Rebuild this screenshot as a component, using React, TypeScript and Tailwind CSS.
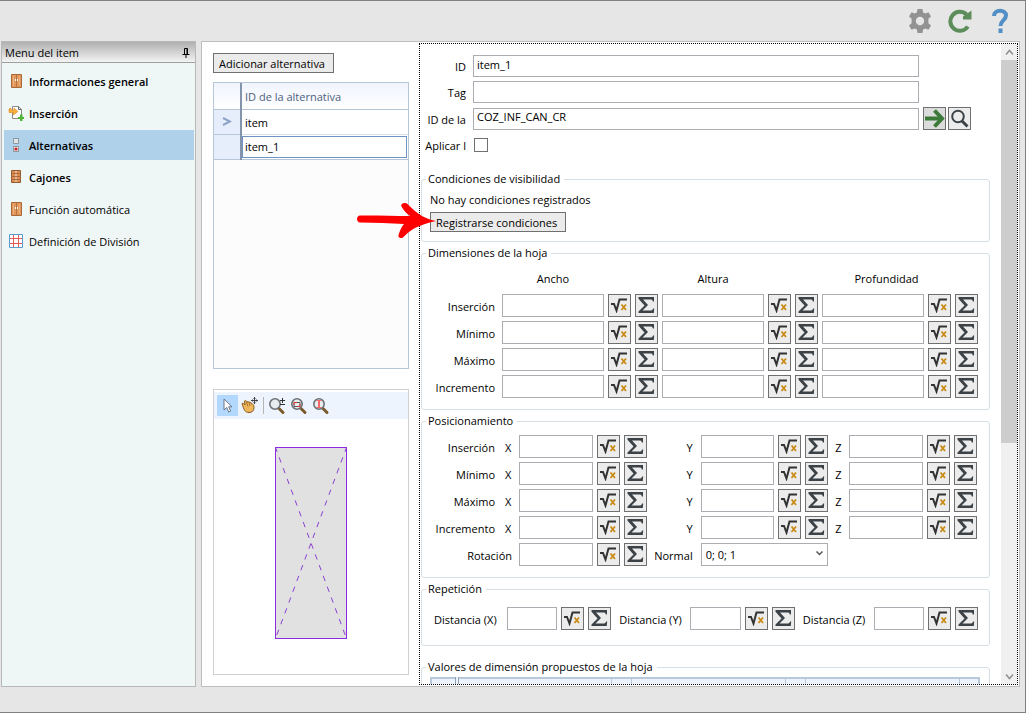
import { Fragment, useState, type ReactNode } from 'react';

const SIDEBAR = [
  { label: 'Informaciones general', icon: 'cabinet', bold: true },
  { label: 'Inserción', icon: 'insert', bold: true },
  { label: 'Alternativas', icon: 'options', bold: true },
  { label: 'Cajones', icon: 'drawers', bold: true },
  { label: 'Función automática', icon: 'cabinet', bold: false },
  { label: 'Definición de División', icon: 'grid', bold: false },
];

const LIMITS = ['Inserción', 'Mínimo', 'Máximo', 'Incremento'];
const SIZES = ['Ancho', 'Altura', 'Profundidad'];
const AXES = ['X', 'Y', 'Z'];

export default function App() {
  const [active, setActive] = useState('Alternativas');

  return (
    <div className="h-screen overflow-hidden bg-white pr-[6px] pb-[5px] font-['Open_Sans','Noto_Sans',sans-serif] text-[11px] leading-4 text-black">
      <div className="flex h-full flex-col border-t border-r border-b border-[#808080] bg-[#e6e6e6]">
        <TopBar />
        <div className="flex min-h-0 flex-1 gap-[5px] pr-[5px] pb-[25px] pl-px">
          <Sidebar active={active} onSelect={setActive} />
          <main className="relative flex min-w-0 flex-1 border border-[#bdbdbd] bg-white">
            <section className="flex w-[217px] shrink-0 flex-col items-start pt-[11px] pr-[10px] pb-[11px] pl-[11px]">
              <TextButton>Adicionar alternativa</TextButton>
              <AlternativesTable />
              <Preview />
            </section>
            <Form />
            <PointerArrow />
          </main>
        </div>
      </div>
    </div>
  );
}

function TopBar() {
  return (
    <header className="flex h-10 shrink-0 items-center justify-end gap-4 pr-[14px]">
      <button aria-label="Configuración">
        <svg width="24" height="24" viewBox="0 0 24 24">
          <path
            fill="#929292"
            fillRule="evenodd"
            d="M9.500 0h5l.6 3.400 2.200 1.200 3.200-1.300 2.500 4.300-2.600 2.200v4.400l2.600 2.200-2.500 4.300-3.200-1.300-2.200 1.200-.6 3.400h-5l-.6-3.400-2.200-1.200-3.200 1.300L1 16.400l2.600-2.200V9.800L1 7.600l2.500-4.300 3.200 1.300 2.200-1.200zM12 7.800a4.200 4.200 0 1 0 0 8.400 4.200 4.200 0 0 0 0-8.400z"
          />
        </svg>
      </button>
      <button aria-label="Actualizar">
        <svg width="25" height="24" viewBox="0 0 25 24" fill="none">
          <path d="M19.800 17.500A9.500 9.500 0 1 1 18.500 5.500" stroke="#5c8d5a" strokeWidth="4" />
          <path d="M23.500 1.500v9h-8.500v-3z" fill="#5c8d5a" />
        </svg>
      </button>
      <button aria-label="Ayuda">
        <svg width="22" height="26" viewBox="0 0 22 26" fill="none">
          <path d="M5 8C5 1 17 1 17 7.500c0 4.500-5.500 5-5.500 10.500" stroke="#528fc6" strokeWidth="4" />
          <path d="M9.500 20.500h4V25h-4z" fill="#528fc6" />
        </svg>
      </button>
    </header>
  );
}

function Sidebar({ active, onSelect }: { active: string; onSelect: (label: string) => void }) {
  return (
    <aside className="flex w-[195px] shrink-0 flex-col border border-[#b8b8b8] bg-[#eff6f6]">
      <div className="flex h-[21px] shrink-0 items-center justify-between border-b border-[#a0a0a0] bg-linear-to-b from-[#b0b0b0] to-[#f4f4f4] pt-0.5 pr-1 pl-[3px]">
        <span>Menu del item</span>
        <button aria-label="Fijar">
          <svg width="10" height="11" viewBox="0 0 10 11" fill="none" stroke="#000">
            <path d="M3.500 6V.5h3V6M1.500 6.500h7M5 6.500V10M6 1v5" />
          </svg>
        </button>
      </div>
      <nav className="flex flex-col gap-0.5 pt-[3px] pr-px pl-0.5">
        {SIDEBAR.map(({ label, icon, bold }) => (
          <button
            key={label}
            onClick={() => onSelect(label)}
            className={`flex h-[30px] items-center gap-[5px] pl-1 text-left ${bold ? 'font-semibold' : ''} ${
              active === label ? 'bg-[#afd1ea]' : ''
            }`}
          >
            <SidebarIcon name={icon} />
            <span className="pt-0.5">{label}</span>
          </button>
        ))}
      </nav>
    </aside>
  );
}

function SidebarIcon({ name }: { name: string }) {
  return (
    <svg width="16" height="16" viewBox="0 0 16 16" fill="none" className="shrink-0">
      {name === 'cabinet' && (
        <>
          <path d="M3.500 1.500h10v13h-10z" fill="#e2975c" stroke="#a8693a" />
          <path d="M8.500 2v12" stroke="#b87440" />
          <path d="M5.500 3.500v9M11.500 3.500v9" stroke="#eeb07c" />
          <path d="M7 6h1v2H7zM9 6h1v2H9z" fill="#fff" />
        </>
      )}
      {name === 'insert' && (
        <>
          <path d="M4.500 1.500h6l3 3v9h-9z" fill="#fff" stroke="#8a8a8a" />
          <path d="M10.500 1.500v3h3" stroke="#666" />
          <path d="M1 4v3.500h4.500V10L10 6.500 6 3v2H3V3z" fill="#f5b041" stroke="#e08a1c" strokeWidth=".6" />
          <path d="M12 9.500h2.500V12H16v2h-1.500v2H12v-2h-2v-2h2z" fill="#4fb53b" />
        </>
      )}
      {name === 'options' && (
        <>
          <rect x="5.500" y="1.500" width="5" height="5" fill="#dfe6ea" stroke="#8f9aa3" />
          <rect x="5.500" y="9.500" width="5" height="5" fill="#f3dede" stroke="#8f9aa3" />
          <circle cx="8" cy="12" r="1.600" fill="#c62828" />
        </>
      )}
      {name === 'drawers' && (
        <>
          <path d="M3.500 1.500h9v12h-9z" fill="#d98c52" stroke="#935a30" />
          <path d="M3 4.500h10M3 7.500h10M3 10.500h10" stroke="#a86a3c" />
          <path d="M7 3h2M7 6h2M7 9h2M7 12h2" stroke="#f6e3d3" />
        </>
      )}
      {name === 'grid' && (
        <>
          <path d="M1.500 1.500h13v13h-13z" fill="#fff" stroke="#5a9bd0" />
          <path d="M5.500 2v12M10.500 2v12M2 5.500h12M2 10.500h12" stroke="#e05a5a" />
        </>
      )}
    </svg>
  );
}

function AlternativesTable() {
  return (
    <div className="mt-[9px] min-h-0 w-full flex-1 border border-[#b7c6d6] bg-[#fcfcfc]">
      <table className="w-full border-collapse bg-white text-left">
        <thead>
          <tr className="h-[26px] bg-linear-to-b from-[#f0f4fd] to-white">
            <td className="w-[27px] border-r border-b border-[#b7c6d6]" />
            <th scope="col" className="border-b border-l-2 border-b-[#b7c6d6] border-l-[#8394ab] pt-0.5 pl-[3px] font-normal text-[#4e617d]">
              ID de la alternativa
            </th>
          </tr>
        </thead>
        <tbody>
          <tr className="h-[25px]">
            <td className="border-r border-b border-[#b7c6d6] bg-[#e7eefb]">
              <svg width="10" height="9" viewBox="0 0 10 9" fill="none" stroke="#8ba3c7" strokeWidth="2" className="mx-auto">
                <path d="M1 1l7 3.500L1 8" />
              </svg>
            </td>
            <td className="border-b border-l-2 border-b-[#d9e5f3] border-l-[#8394ab] pt-0.5 pl-[3px]">item</td>
          </tr>
          <tr className="h-[25px]">
            <td className="border-r border-b border-[#b7c6d6] bg-[#e7eefb]" />
            <td className="border-b border-l-2 border-b-[#b7c6d6] border-l-[#8394ab] p-0 pr-px">
              <input
                aria-label="ID de la alternativa"
                defaultValue="item_1"
                className="block h-[22px] w-full border border-[#6f94c4] bg-white pl-0.5 outline-none"
              />
            </td>
          </tr>
        </tbody>
      </table>
    </div>
  );
}

function Preview() {
  return (
    <div className="mt-5 flex h-[286px] w-full shrink-0 flex-col border border-[#d0d0d0] pt-0.5">
      <div className="flex h-[27px] shrink-0 items-center bg-[#edf4fd] pl-[3px]">
        <button aria-label="Seleccionar" className="flex h-[21px] w-[21px] items-center justify-center bg-[#b3d8fd]">
          <svg width="12" height="16" viewBox="0 0 12 16">
            <path d="M2 1v11l2.700-2.500 2 4.500 2-1-2-4.200H10z" fill="#fff" stroke="#6b7484" />
          </svg>
        </button>
        <button aria-label="Desplazar" className="ml-[3px]">
          <svg width="18" height="17" viewBox="0 0 18 17" fill="none">
            <path
              d="M1 6.500c1-.8 2 .4 3 1.500L3.500 4c1-1.200 2 0 2.500 1.500C6 4 7.500 4 8 5.500c1-1 2.500 0 2.500 1.500 1.500-.5 2.500 1 2.500 3.500 0 3.500-2 5-5 5-4 0-5-2.500-7-9z"
              fill="#efb75c"
              stroke="#8a5a1e"
            />
            <path d="M5.500 5.500l1.500 4M8 5.500l1 3.500" stroke="#a87230" />
            <path d="M13.500 0v7M10 3.500h7M12.500 1.500h2M12.500 5.500h2M11.500 2.500v2M15.500 2.500v2" stroke="#444" />
          </svg>
        </button>
        <span className="mx-1 h-[17px] w-px bg-[#b4b4b4]" />
        <button aria-label="Ampliar o reducir">
          <Lens>
            <path d="M14.500 1v5M12 3.500h5M12 7.500h5" stroke="#333" />
          </Lens>
        </button>
        <button aria-label="Zoom de ventana" className="ml-1">
          <Lens>
            <path d="M4 5.500h6v4H4z" stroke="#555" />
            <path d="M4 8V5.500h3M10 7v2.500H7" stroke="#e03030" />
          </Lens>
        </button>
        <button aria-label="Zoom extendido" className="ml-1">
          <Lens>
            <path d="M7 3.500v7" stroke="#f06a6a" strokeWidth="2" />
            <path d="M4.500 3.500h5M4.500 10.500h5" stroke="#f06a6a" />
          </Lens>
        </button>
      </div>
      <div className="flex flex-1 items-center justify-center pb-[7px]">
        <svg width="72" height="193" viewBox="0 0 72 193" fill="none" stroke="#8a2be2">
          <rect x=".5" y=".5" width="71" height="191" fill="#e1e1e1" />
          <path d="M.5.5l71 191M71.500.5l-71 191" stroke="#8b3fd0" strokeDasharray="5.500 6" strokeDashoffset="1" />
        </svg>
      </div>
    </div>
  );
}

function Lens({ children }: { children: ReactNode }) {
  return (
    <svg width="18" height="18" viewBox="0 0 18 18" fill="none">
      <path d="M10.500 11l4.500 4.500" stroke="#7a5a2c" strokeWidth="3" strokeLinecap="round" />
      <circle cx="7" cy="7" r="5.200" fill="#e8edf0" stroke="#6d7275" strokeWidth="1.600" />
      {children}
    </svg>
  );
}

function Form() {
  return (
    <form className="mr-px mb-px mt-px flex min-w-0 flex-1 border border-dotted border-black" onSubmit={(e) => e.preventDefault()}>
      <div className="min-w-0 flex-1 overflow-hidden pt-[11px] pr-[11px] pl-px">
        <General />
        <Group title="Condiciones de visibilidad" className="mt-[15px] pt-[5px] pb-[9px] pl-2">
          <p>No hay condiciones registrados</p>
          <div className="mt-1 flex">
            <TextButton>Registrarse condiciones</TextButton>
          </div>
        </Group>
        <Dimensions />
        <Position />
        <Repetition />
        <Group title="Valores de dimensión propuestos de la hoja" className="mt-[13px] h-16 pt-0.5 pr-[9px] pl-2">
          <table className="w-full table-fixed border-collapse border-2 border-[#b7c9da] bg-[#edf3fc]">
            <thead>
              <tr className="h-6">
                <td className="w-[26px] border-r-4 border-double border-[#8fa3b8]" />
                <td className="border-r border-[#b7c9da]" />
                <td className="w-5 border-r border-[#b7c9da]" />
                <td className="border-r border-[#b7c9da]" />
                <td className="w-5 border-r border-[#b7c9da]" />
                <td className="border-r border-[#b7c9da]" />
                <td className="w-5" />
              </tr>
            </thead>
          </table>
        </Group>
      </div>
      <div className="flex w-4 shrink-0 flex-col bg-[#f0f0f0]">
        <ScrollButton label="Subir" path="M1 5.500L4.500 1.500 8 5.500" />
        <div className="min-h-0 flex-1">
          <div className="h-[63%] bg-[#cdcdcd]" />
        </div>
        <ScrollButton label="Bajar" path="M1 1.500L4.500 5.500 8 1.500" />
      </div>
    </form>
  );
}

function General() {
  return (
    <div className="flex flex-col gap-1">
      <GeneralRow label="ID" id="item-id">
        <input id="item-id" defaultValue="item_1" className="h-[22px] min-w-0 flex-1 border border-[#abadb3] px-[3px] pb-1 outline-none" />
      </GeneralRow>
      <GeneralRow label="Tag" id="item-tag">
        <input id="item-tag" className="h-[22px] min-w-0 flex-1 border border-[#abadb3] px-[3px] pb-1 outline-none" />
      </GeneralRow>
      <GeneralRow label="ID de la" id="sheet-id" tools>
        <input id="sheet-id" defaultValue="COZ_INF_CAN_CR" className="h-[22px] min-w-0 flex-1 border border-[#abadb3] px-[3px] pb-1 outline-none" />
      </GeneralRow>
      <GeneralRow label="Aplicar l" id="apply">
        <input
          id="apply"
          type="checkbox"
          className="ml-px h-[14px] w-[14px] appearance-none border border-[#707070] bg-white checked:bg-[#707070]"
        />
      </GeneralRow>
    </div>
  );
}

function GeneralRow({ label, id, tools, children }: { label: string; id: string; tools?: boolean; children: ReactNode }) {
  return (
    <div className="flex min-h-[22px] items-center gap-[7px]">
      <label htmlFor={id} className="w-[45px] shrink-0 overflow-hidden pt-0.5 text-right whitespace-nowrap">
        {label}
      </label>
      <div className="flex min-w-0 flex-1">{children}</div>
      <div className="-ml-[3px] flex w-[67px] shrink-0 gap-0.5">
        {tools && (
          <>
            <button type="button" aria-label="Ir a la hoja" className="flex h-[23px] w-[23px] items-center justify-center border border-[#707070] bg-[#dcdcdc]">
              <svg width="20" height="19" viewBox="0 0 20 19" fill="none" stroke="#3c7a3a" strokeWidth="4">
                <path d="M0 9.500h17" />
                <path d="M9.500 1.500l7.500 8-7.500 8" />
              </svg>
            </button>
            <button type="button" aria-label="Buscar hoja" className="flex h-[23px] w-[23px] items-center justify-center border border-[#707070] bg-[#ececec]">
              <svg width="19" height="19" viewBox="0 0 19 19" fill="none" stroke="#3c4348">
                <circle cx="8" cy="7.500" r="5.800" strokeWidth="2" />
                <path d="M12 12l5.500 5.500" strokeWidth="3" />
              </svg>
            </button>
          </>
        )}
      </div>
    </div>
  );
}

function Dimensions() {
  return (
    <Group title="Dimensiones de la hoja" className="mt-[3px] pt-[10px] pr-[11px] pb-[11px] pl-2">
      <div className="grid grid-cols-[68px_1fr_23px_23px_1fr_23px_23px_1fr_23px_23px] gap-1">
        <span />
        <span className="mb-[3px] text-center">{SIZES[0]}</span>
        <span className="col-span-2" />
        <span className="mb-[3px] text-center">{SIZES[1]}</span>
        <span className="col-span-2" />
        <span className="col-span-2 mb-[3px] text-center">{SIZES[2]}</span>
        <span />
        {LIMITS.map((limit) => (
          <Fragment key={limit}>
            <label htmlFor={`dim-${limit}-Ancho`} className="self-center pt-0.5 pr-[3px] text-right">
              {limit}
            </label>
            {SIZES.map((size) => (
              <Formula key={size} id={`dim-${limit}-${size}`} name={`${limit} ${size}`} />
            ))}
          </Fragment>
        ))}
      </div>
    </Group>
  );
}

function Position() {
  return (
    <Group title="Posicionamiento" className="mt-[3px] pt-[6px] pr-3 pb-[11px] pl-2">
      <div className="grid grid-cols-[68px_13px_1fr_23px_23px_46px_1fr_23px_23px_13px_1fr_23px_23px] gap-1">
        {LIMITS.map((limit) => (
          <Fragment key={limit}>
            <span className="self-center pt-0.5 pr-[3px] text-right">{limit}</span>
            {AXES.map((axis) => (
              <Fragment key={axis}>
                <label
                  htmlFor={`pos-${limit}-${axis}`}
                  className={`self-center pt-0.5 ${axis === 'Y' ? 'pr-1 text-right' : 'pl-[3px]'}`}
                >
                  {axis}
                </label>
                <Formula id={`pos-${limit}-${axis}`} name={`${limit} ${axis}`} />
              </Fragment>
            ))}
          </Fragment>
        ))}
        <label htmlFor="rotation" className="col-span-2 self-center pt-0.5 pr-[3px] text-right">
          Rotación
        </label>
        <Formula id="rotation" name="Rotación" />
        <label htmlFor="normal" className="self-center pt-0.5 pr-1 text-right">
          Normal
        </label>
        <div className="relative col-span-3">
          <select id="normal" className="h-[23px] w-full appearance-none border border-[#abadb3] bg-white pt-px pl-1 outline-none">
            <option>0; 0; 1</option>
            <option>0; 1; 0</option>
            <option>1; 0; 0</option>
          </select>
          <svg width="7" height="5" viewBox="0 0 7 5" fill="none" stroke="#555" strokeWidth="1.500" className="pointer-events-none absolute top-2 right-[5px]">
            <path d="M.5.5l3 3 3-3" />
          </svg>
        </div>
      </div>
    </Group>
  );
}

function Repetition() {
  return (
    <Group title="Repetición" className="mt-[3px] pt-[10px] pr-[11px] pb-[15px] pl-2">
      <div className="grid grid-cols-[73px_1fr_23px_23px_71px_1fr_23px_23px_71px_1fr_23px_23px] gap-1">
        {AXES.map((axis) => (
          <Fragment key={axis}>
            <label htmlFor={`rep-${axis}`} className="self-center pt-0.5 pl-1 whitespace-nowrap">
              Distancia ({axis})
            </label>
            <Formula id={`rep-${axis}`} name={`Distancia (${axis})`} />
          </Fragment>
        ))}
      </div>
    </Group>
  );
}

// Text box plus the two expression buttons, three cells of the parent grid
function Formula({ id, name }: { id: string; name: string }) {
  return (
    <>
      <input id={id} aria-label={name} className="h-[23px] w-full min-w-0 border border-[#abadb3] bg-white px-[3px] outline-none" />
      <button type="button" aria-label={`Fórmula de ${name}`} className="flex h-[23px] w-[23px] items-center justify-center border border-[#707070] bg-[#ececec]">
        <svg width="17" height="15" viewBox="0 0 17 15" fill="none">
          <path d="M0 6h3L5.500 12.500 8.500 1.500H16" stroke="#333" strokeWidth="2" />
          <path d="M10.500 6.500l4.500 5.500M15 6.500L10.500 12" stroke="#c98a14" strokeWidth="1.800" />
        </svg>
      </button>
      <button type="button" aria-label={`Suma de ${name}`} className="flex h-[23px] w-[23px] items-center justify-center border border-[#707070] bg-[#ececec]">
        <svg width="17" height="17" viewBox="0 0 17 17">
          <path d="M.5 0H16v4.500h-1.200C14.600 3 14 2.500 12 2.500H5L10 8l-5.500 5.500H12c2 0 2.700-.5 3-2h1.200L15.800 16H.5v-1.500L6.500 8.500.5 1.800z" fill="#3c4246" />
        </svg>
      </button>
    </>
  );
}

function Group({ title, className, children }: { title: string; className: string; children: ReactNode }) {
  return (
    <fieldset className={`min-w-0 rounded-[3px] border border-[#d5dfe5] ${className}`}>
      <legend className="-ml-1 px-0.5 pr-1">{title}</legend>
      {children}
    </fieldset>
  );
}

function TextButton({ children }: { children: ReactNode }) {
  return (
    <button type="button" className="flex h-5 shrink-0 items-center border border-[#707070] bg-[#ebebeb] pt-0.5 pr-2 pl-[5px] whitespace-nowrap">
      {children}
    </button>
  );
}

function ScrollButton({ label, path }: { label: string; path: string }) {
  return (
    <button type="button" aria-label={label} className="flex h-4 shrink-0 items-center justify-center">
      <svg width="9" height="7" viewBox="0 0 9 7" fill="none" stroke="#909090" strokeWidth="1.500">
        <path d={path} />
      </svg>
    </button>
  );
}

function PointerArrow() {
  return (
    <svg width="82" height="38" viewBox="0 0 82 38" className="pointer-events-none absolute top-[160px] left-[154px]" fill="red">
      <path d="M4 13.500c-4 .2-4 6.800 0 7 15 .3 30 .8 44 1.500-3 3.500-4 6.500-5.500 11-.8 3.500 3.500 4 5.500 1.500 6-6.500 14-11.500 32-15.500C65 16 59 9 52 2.500c-3-3-8-1-6.500 2 2 4 5 7 8.500 9.500-17 0-32.500-.7-50-.5z" />
    </svg>
  );
}
